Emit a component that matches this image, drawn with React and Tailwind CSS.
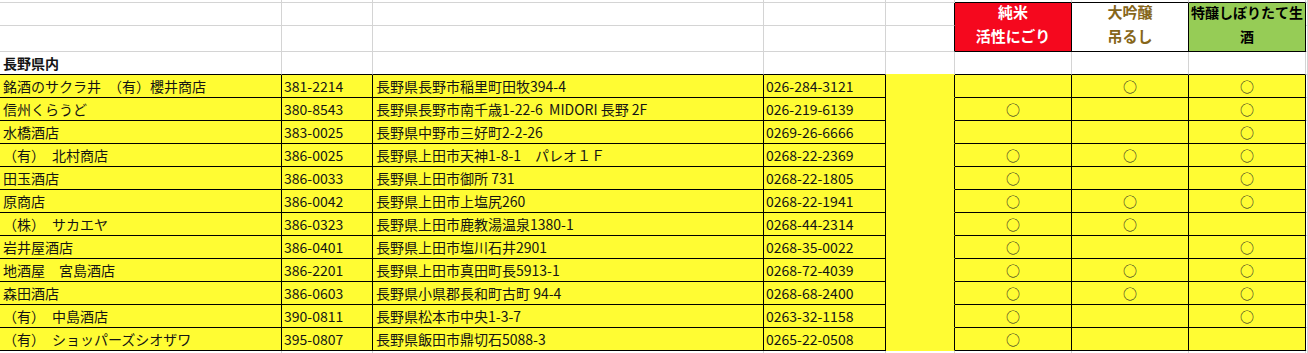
import React from "react";

const rows = [
  ["銘酒のサクラ井　（有）櫻井商店", "381-2214", "長野県長野市稲里町田牧394-4", "026-284-3121", 0, 1, 1],
  ["信州くらうど", "380-8543", "長野県長野市南千歳1-22-6  MIDORI 長野 2F", "026-219-6139", 1, 0, 1],
  ["水橋酒店", "383-0025", "長野県中野市三好町2-2-26", "0269-26-6666", 0, 0, 1],
  ["（有）　北村商店", "386-0025", "長野県上田市天神1-8-1　パレオ１Ｆ", "0268-22-2369", 1, 1, 1],
  ["田玉酒店", "386-0033", "長野県上田市御所 731", "0268-22-1805", 1, 0, 1],
  ["原商店", "386-0042", "長野県上田市上塩尻260", "0268-22-1941", 1, 1, 1],
  ["（株）　サカエヤ", "386-0323", "長野県上田市鹿教湯温泉1380-1", "0268-44-2314", 1, 1, 0],
  ["岩井屋酒店", "386-0401", "長野県上田市塩川石井2901", "0268-35-0022", 1, 0, 1],
  ["地酒屋　宮島酒店", "386-2201", "長野県上田市真田町長5913-1", "0268-72-4039", 1, 1, 1],
  ["森田酒店", "386-0603", "長野県小県郡長和町古町 94-4", "0268-68-2400", 1, 1, 1],
  ["（有）　中島酒店", "390-0811", "長野県松本市中央1-3-7", "0263-32-1158", 1, 0, 1],
  ["（有）　ショッパーズシオザワ", "395-0807", "長野県飯田市鼎切石5088-3", "0265-22-0508", 1, 0, 0],
];

function WhiteCol({ w, r1 = "border-r-[#d4d4d4]", r2 = "border-r-[#d4d4d4]" }) {
  return (
    <div className={`flex flex-col ${w}`}>
      <div className={`h-[23px] border-r border-b border-b-[#d4d4d4] ${r1}`} />
      <div className={`h-[26px] border-r border-b border-b-[#d4d4d4] ${r2}`} />
    </div>
  );
}

function Circle({ on }) {
  return (
    <div className="w-[117px] h-[23px] border-r border-b border-black bg-[#fffc33] flex items-center justify-center text-[#222]">
      {on ? "○" : ""}
    </div>
  );
}

export default function App() {
  return (
    <div className="w-[1308px] h-[353px] overflow-hidden bg-white font-['Noto_Sans_CJK_JP',sans-serif] text-[14px] text-[#141414] leading-none">
      {/* row 0 */}
      <div className="flex h-[3px]">
        <div className="w-[282px] border-r border-b border-[#d4d4d4]" />
        <div className="w-[91px] border-r border-b border-[#d4d4d4]" />
        <div className="w-[391px] border-r border-b border-[#d4d4d4]" />
        <div className="w-[122px] border-r border-b border-[#d4d4d4]" />
        <div className="w-[69px] border-r border-b border-[#d4d4d4]" />
        <div className="w-[117px] border-r border-r-[#d4d4d4] border-b border-b-black" />
        <div className="w-[117px] border-r border-r-[#d4d4d4] border-b border-b-black" />
        <div className="w-[117px] border-r border-r-[#d4d4d4] border-b border-b-black" />
        <div className="w-[2px] border-r border-b border-[#d4d4d4]" />
      </div>
      {/* header rows */}
      <div className="flex">
        <WhiteCol w="w-[282px]" />
        <WhiteCol w="w-[91px]" />
        <WhiteCol w="w-[391px]" />
        <WhiteCol w="w-[122px]" />
        <WhiteCol w="w-[69px]" r1="border-r-black" r2="border-r-black" />
        <div className="w-[117px] h-[49px] border-r border-b border-black bg-[#f5081e] text-white text-[15px] font-bold flex flex-col items-center leading-[24px]">
          <span className="-mt-[3px]">純米</span>
          <span>活性にごり</span>
        </div>
        <div className="w-[117px] h-[49px] border-r border-b border-black bg-white text-[#86661a] text-[15px] font-bold flex flex-col items-center leading-[24px]">
          <span className="-mt-[3px]">大吟醸</span>
          <span>吊るし</span>
        </div>
        <div className="w-[117px] h-[49px] border-r border-b border-black bg-[#96cc56] text-black font-bold flex flex-col items-center leading-[24px] whitespace-nowrap">
          <span className="-mt-[3px]">特醸しぼりたて生</span>
          <span>酒</span>
        </div>
        <div className="flex flex-col w-[2px]">
          <div className="h-[23px] border-r border-b border-[#d4d4d4]" />
          <div className="h-[26px] border-r border-b border-[#d4d4d4]" />
        </div>
      </div>
      {/* row 3 */}
      <div className="flex h-[23px]">
        <div className="w-[282px] border-r border-r-[#d4d4d4] border-b border-b-black font-bold flex items-center pl-[3px]">長野県内</div>
        <div className="w-[91px] border-r border-r-[#d4d4d4] border-b border-b-black" />
        <div className="w-[391px] border-r border-r-[#d4d4d4] border-b border-b-black" />
        <div className="w-[122px] border-r border-r-[#d4d4d4] border-b border-b-black" />
        <div className="w-[69px] border-r border-r-[#d4d4d4] border-b border-b-[#fffc33]" />
        <div className="w-[117px] border-r border-r-[#d4d4d4] border-b border-b-black" />
        <div className="w-[117px] border-r border-r-[#d4d4d4] border-b border-b-black" />
        <div className="w-[117px] border-r border-r-[#d4d4d4] border-b border-b-black" />
        <div className="w-[2px] border-r border-b border-[#d4d4d4]" />
      </div>
      {/* data rows */}
      {rows.map((r, i) => (
        <div key={i} className="flex h-[23px]">
          <div className="w-[282px] border-r border-b border-black bg-[#fffc33] flex items-center pl-[3px] whitespace-pre overflow-hidden">{r[0]}</div>
          <div className="w-[91px] border-r border-b border-black bg-[#fffc33] flex items-center pl-[2px] whitespace-pre overflow-hidden">{r[1]}</div>
          <div className="w-[391px] border-r border-b border-black bg-[#fffc33] flex items-center pl-[3px] whitespace-pre overflow-hidden">{r[2]}</div>
          <div className="w-[122px] border-r border-b border-black bg-[#fffc33] flex items-center pl-[2px] whitespace-pre overflow-hidden">{r[3]}</div>
          <div className="w-[69px] border-r border-r-black border-b border-b-[#fffc33] bg-[#fffc33]" />
          <Circle on={r[4]} />
          <Circle on={r[5]} />
          <Circle on={r[6]} />
          <div className="w-[2px] border-r border-b border-[#d4d4d4]" />
        </div>
      ))}
      {/* filler */}
      <div className="flex h-[3px]">
        <div className="w-[282px] border-r border-[#d4d4d4]" />
        <div className="w-[91px] border-r border-[#d4d4d4]" />
        <div className="w-[391px] border-r border-[#d4d4d4]" />
        <div className="w-[122px] border-r border-[#d4d4d4]" />
        <div className="w-[69px] border-r border-[#d4d4d4]" />
        <div className="w-[117px] border-r border-[#d4d4d4]" />
        <div className="w-[117px] border-r border-[#d4d4d4]" />
        <div className="w-[117px] border-r border-[#d4d4d4]" />
        <div className="w-[2px] border-r border-[#d4d4d4]" />
      </div>
    </div>
  );
}
